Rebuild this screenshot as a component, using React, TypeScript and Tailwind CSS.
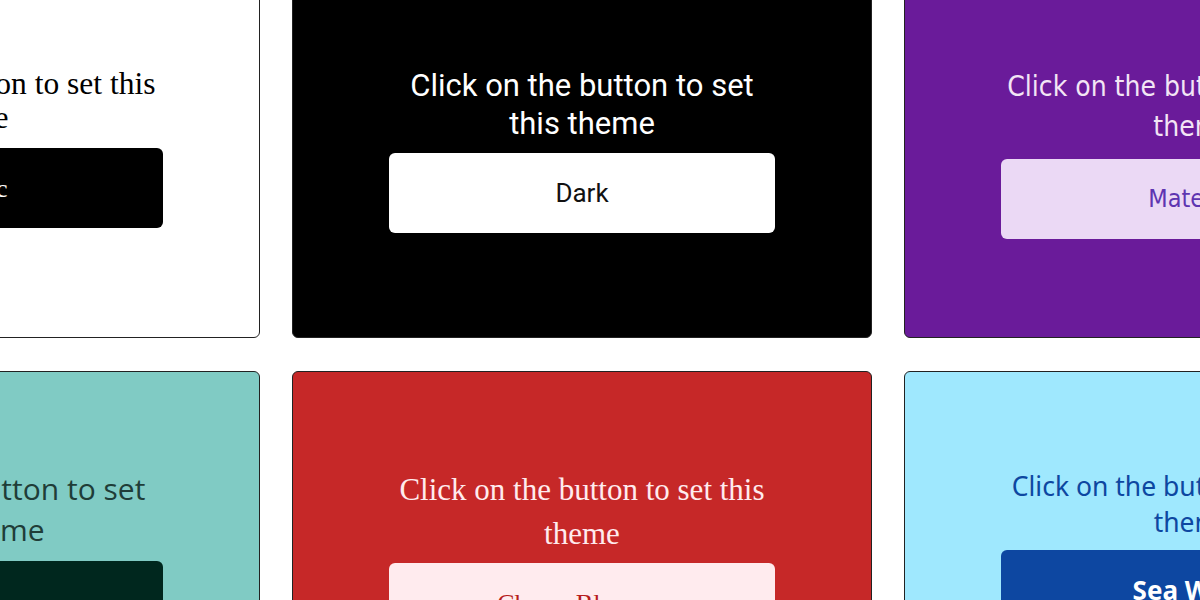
type Theme = {
  name: string;
  card: string;
  text: string;
  button: string;
};

const themes: Theme[] = [
  {
    name: "Classic",
    card: "bg-white",
    text: "text-black text-[31.5px] leading-[34px] font-['Liberation_Serif',serif]",
    button: "mt-[13px] bg-black text-white text-[26px] font-['Liberation_Serif',serif]",
  },
  {
    name: "Dark",
    card: "bg-black",
    text: "text-white text-[31px] leading-[38px] font-['Roboto',sans-serif]",
    button: "mt-2.5 bg-white text-[#111] text-[26px] font-['Roboto',sans-serif]",
  },
  {
    name: "Material",
    card: "bg-[#6a1b9a]",
    text: "text-[#f3e5f5] text-[28px] leading-[40px] font-['Liberation_Sans_Narrow','DejaVu_Sans_Condensed',sans-serif]",
    button: "mt-3 bg-[#ebd9f5] text-[#5e35b1] text-[25px] font-['Liberation_Sans_Narrow','DejaVu_Sans_Condensed',sans-serif]",
  },
  {
    name: "Teal",
    card: "bg-[#80cbc4]",
    text: "text-[#1f3d38] text-[30px] leading-[41px] font-['Open_Sans',sans-serif]",
    button: "mt-[11px] bg-[#00271e] text-white text-[26px] font-['Open_Sans',sans-serif]",
  },
  {
    name: "Cherry Blossom",
    card: "bg-[#c62828]",
    text: "text-[#ffebee] text-[31px] leading-[44px] font-['Liberation_Serif',serif]",
    button: "mt-[7px] bg-[#ffebee] text-[#b71c1c] text-[26px] font-['Liberation_Serif',serif]",
  },
  {
    name: "Sea Wave",
    card: "bg-[#9fe8fe]",
    text: "text-[#0d47a1] text-[26.5px] leading-[36px] font-['Noto_Sans',sans-serif]",
    button: "mt-2.5 bg-[#0d47a1] text-white font-bold text-[26px] font-['Noto_Sans',sans-serif]",
  },
];

export default function App() {
  return (
    <div className="w-[1200px] h-[600px] overflow-hidden bg-white">
      <div className="grid grid-cols-[580px_580px_580px] gap-x-8 gap-y-[33px] ml-[-320px] mt-[-30px] w-max">
        {themes.map((t) => (
          <div
            key={t.name}
            className={`h-[368px] border border-[#222] rounded-[6px] flex flex-col items-center pt-[96px] ${t.card}`}
          >
            <p className={`w-2/3 text-center ${t.text}`}>Click on the button to set this theme</p>
            <button className={`w-2/3 h-[80px] rounded-[6px] ${t.button}`}>{t.name}</button>
          </div>
        ))}
      </div>
    </div>
  );
}
